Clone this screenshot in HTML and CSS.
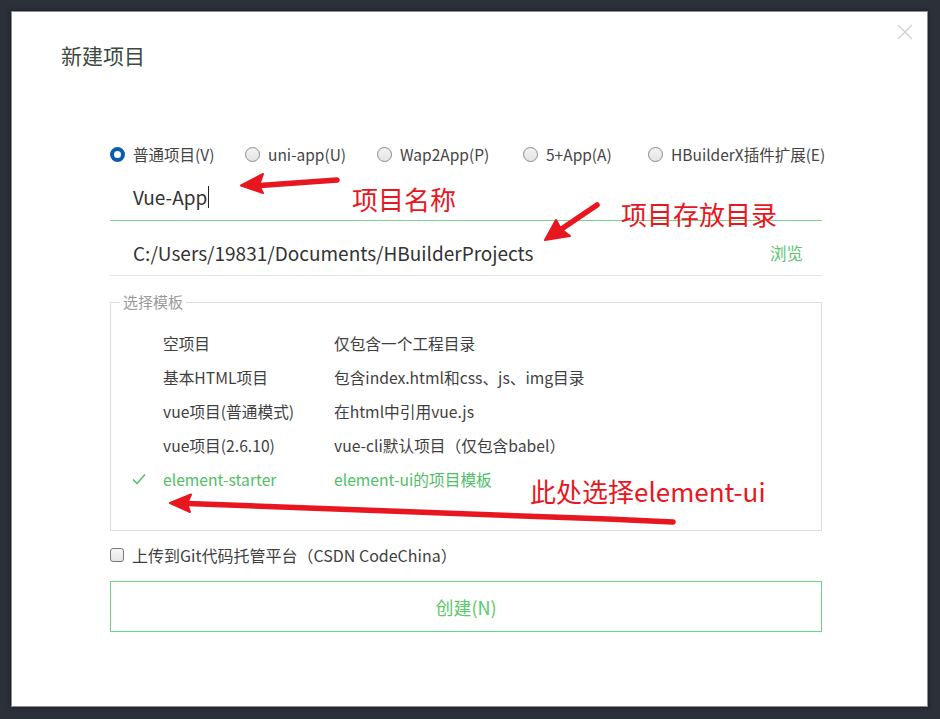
FILE: index.html
```html
<!DOCTYPE html>
<html lang="zh-CN">
<head>
<meta charset="utf-8">
<title>新建项目</title>
<link rel="stylesheet" href="styles.css">
</head>
<body>
<div class="dialog">
  <svg class="close" width="16" height="16" viewBox="0 0 16 16"><path d="M1 1L15 15M15 1L1 15" stroke="#cfcfcf" stroke-width="1.3" fill="none"/></svg>
  <h1 class="title">新建项目</h1>
  <div class="form">
    <div class="radios">
      <label class="radio"><span class="dot on"></span>普通项目(V)</label>
      <label class="radio"><span class="dot"></span>uni-app(U)</label>
      <label class="radio"><span class="dot"></span>Wap2App(P)</label>
      <label class="radio"><span class="dot"></span>5+App(A)</label>
      <label class="radio"><span class="dot"></span>HBuilderX插件扩展(E)</label>
    </div>
    <div class="field name-field"><span class="value">Vue-App</span><span class="caret"></span></div>
    <div class="field path-field"><span class="value">C:/Users/19831/Documents/HBuilderProjects</span><span class="browse">浏览</span></div>
    <fieldset class="templates">
      <legend class="legend">选择模板</legend>
      <div class="tpl-list">
        <div class="tpl"><span class="chk"></span><span>空项目</span><span>仅包含一个工程目录</span></div>
        <div class="tpl"><span class="chk"></span><span>基本HTML项目</span><span>包含index.html和css、js、img目录</span></div>
        <div class="tpl"><span class="chk"></span><span>vue项目(普通模式)</span><span>在html中引用vue.js</span></div>
        <div class="tpl"><span class="chk"></span><span>vue项目(2.6.10)</span><span>vue-cli默认项目（仅包含babel）</span></div>
        <div class="tpl selected"><span class="chk"><svg width="14" height="12" viewBox="0 0 14 12"><path d="M1 6.5L5 10.5L13 1.5" stroke="#4dbb63" stroke-width="1.4" fill="none"/></svg></span><span>element-starter</span><span>element-ui的项目模板</span></div>
      </div>
    </fieldset>
    <label class="git"><span class="box"></span>上传到Git代码托管平台（CSDN CodeChina）</label>
    <div class="create">创建(N)</div>
  </div>

  <span class="note note1">项目名称</span>
  <span class="note note2">项目存放目录</span>
  <span class="note note3">此处选择element-ui</span>
</div>
<svg class="arrows" width="940" height="719" viewBox="0 0 940 719">
  <g fill="#e8171f" stroke="#e8171f" stroke-linecap="round" stroke-linejoin="round">
    <path d="M337 180 L260 185.5" stroke-width="5.5" fill="none"/>
    <path d="M241 185.5 L263 174 L259 185.5 L263 193 Z" stroke-width="2"/>
    <path d="M597 205 L560 230" stroke-width="5.5" fill="none"/>
    <path d="M545 240 L556 220 L561 229 L570 236 Z" stroke-width="2"/>
    <path d="M673 522 C500 514 320 508 188 503.5" stroke-width="5.5" fill="none"/>
    <path d="M170 503 L191 494.5 L187 503.5 L190 512 Z" stroke-width="2"/>
  </g>
</svg>
</body>
</html>
```
FILE: styles.css
```css
html, body {
  margin: 0;
  padding: 0;
}
body {
  width: 940px;
  height: 719px;
  background: #2c3039;
  font-family: "Noto Sans CJK SC", "Noto Sans", sans-serif;
  color: #3b3b3b;
  position: relative;
  overflow: hidden;
}
.dialog {
  position: relative;
  margin: 12px 0 0 12px;
  width: 915px;
  height: 694px;
  background: #ffffff;
  box-shadow: 0 0 0 1px #8a8d93, 0 0 4px 2px rgba(0,0,0,0.35);
  box-sizing: border-box;
  padding-top: 29px;
}
.close {
  position: absolute;
  left: 885px;
  top: 12px;
}
.title {
  margin: 0 0 0 49px;
  font-size: 21px;
  line-height: 28px;
  font-weight: normal;
  color: #3d4a3f;
}
.form {
  margin-left: 98px;
  width: 712px;
}
.radios {
  margin-top: 74px;
  height: 22px;
  display: grid;
  grid-template-columns: 135px 132px 146px 125px auto;
  font-size: 15.5px;
  line-height: 22px;
  color: #444;
}
.radio {
  display: flex;
  align-items: center;
  white-space: nowrap;
}
.dot {
  width: 15px;
  height: 15px;
  box-sizing: border-box;
  border-radius: 50%;
  border: 1px solid #8a8a8a;
  background: linear-gradient(#f3f3f3, #e4e4e4);
  margin-right: 8px;
  flex: none;
}
.dot.on {
  border: 4px solid #0b5cad;
  background: #fff;
}
.field {
  display: flex;
  align-items: center;
  box-sizing: border-box;
  padding: 20px 19px 0 23px;
  font-size: 19px;
  line-height: 24px;
  color: #333;
}
.name-field {
  height: 56px;
  padding-bottom: 11px;
  border-bottom: 1px solid #7ed18c;
}
.caret {
  width: 1px;
  height: 22px;
  background: #222;
  margin-left: 1px;
}
.path-field {
  height: 55px;
  padding-bottom: 10px;
  border-bottom: 1px solid #e4e4e4;
}
.path-field .value {
  flex: 1;
}
.browse {
  font-size: 16.5px;
  color: #5cc66f;
}
.templates {
  margin: 16px 0 0 0;
  padding: 0 0 34px 0;
  border: 1px solid #dcdcdc;
  min-inline-size: 0;
}
.legend {
  margin-left: 9px;
  padding: 0 3px;
  font-size: 15px;
  line-height: 20px;
  color: #9a9a9a;
}
.tpl-list {
  padding-top: 14px;
}
.tpl {
  display: grid;
  grid-template-columns: 52px 171px 1fr;
  height: 34px;
  align-items: center;
  font-size: 15.7px;
  color: #3f3f3f;
}
.chk {
  padding-left: 21px;
  display: flex;
  align-items: center;
}
.tpl.selected {
  color: #4fc064;
}
.git {
  margin-top: 13px;
  height: 22px;
  display: flex;
  align-items: center;
  font-size: 16px;
  color: #3f3f3f;
}
.box {
  width: 14px;
  height: 14px;
  box-sizing: border-box;
  border: 1px solid #777;
  border-radius: 3px;
  background: linear-gradient(#f6f6f6, #e6e6e6);
  margin-right: 8px;
}
.create {
  margin-top: 15px;
  height: 51px;
  box-sizing: border-box;
  border: 1px solid #6fd47f;
  display: flex;
  align-items: center;
  justify-content: center;
  font-size: 18px;
  color: #5ac76b;
}
.note {
  position: absolute;
  font-size: 26px;
  line-height: 32px;
  color: #e8171f;
  white-space: nowrap;
}
.note1 { left: 340px; top: 171px; }
.note2 { left: 609px; top: 186px; }
.note3 { left: 518px; top: 463px; }
.arrows {
  position: absolute;
  left: 0;
  top: 0;
  pointer-events: none;
}
```
